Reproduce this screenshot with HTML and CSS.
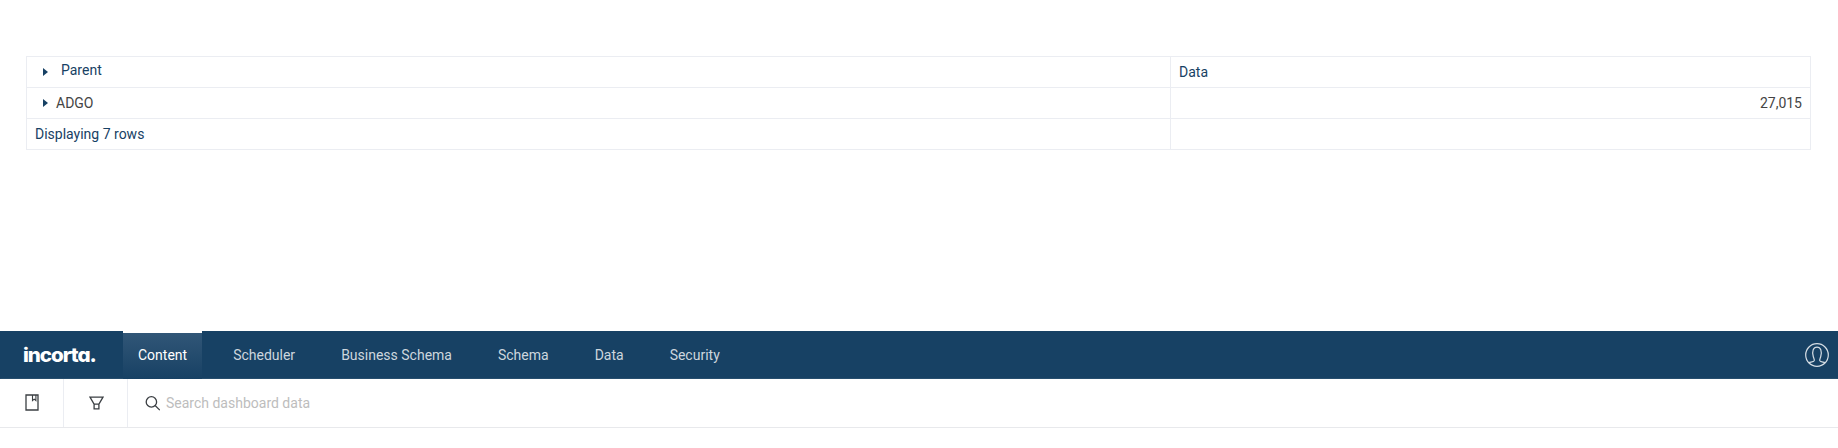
FILE: index.html
```html
<!DOCTYPE html>
<html lang="en">
<head>
<meta charset="utf-8">
<title>Incorta</title>
<link rel="stylesheet" href="styles.css">
</head>
<body>
<main class="report">
  <div class="grid">
    <div class="cell parent"><svg class="caret low" viewBox="0 0 5 8"><path d="M0 0L5 4L0 8Z"/></svg><span>Parent</span></div>
    <div class="cell head">Data</div>
    <div class="cell group"><svg class="caret" viewBox="0 0 5 8"><path d="M0 0L5 4L0 8Z"/></svg><span>ADGO</span></div>
    <div class="cell value">27,015</div>
    <div class="cell">Displaying 7 rows</div>
    <div class="cell"></div>
  </div>
</main>
<header class="navbar">
  <div class="logo"><span>incorta.</span></div>
  <nav class="tabs">
    <a class="tab active">Content</a>
    <a class="tab">Scheduler</a>
    <a class="tab">Business Schema</a>
    <a class="tab">Schema</a>
    <a class="tab">Data</a>
    <a class="tab">Security</a>
  </nav>
  <svg class="avatar" viewBox="0 0 24 24"><circle cx="12" cy="12" r="11.3"/><path d="M4 19.8C5 19 8.4 19.3 9.2 17.8C9.7 16.7 8.8 15.3 8.3 13.7C7.6 11.5 7.4 8.8 8.2 6.7C9 4.7 10.4 4.1 12 4.1S15 4.7 15.8 6.7C16.6 8.8 16.4 11.5 15.7 13.7C15.2 15.3 14.3 16.7 14.8 17.8C15.6 19.3 19 19 20 19.8"/></svg>
</header>
<div class="toolbar">
  <div class="tool"><svg width="14" height="17" viewBox="0 0 14 17"><path d="M1 1H13V16H1Z"/><path class="thin" d="M7.5 1V6.5L9.2 5.1L10.9 6.5V1"/></svg></div>
  <div class="tool"><svg class="funnel" width="15" height="14" viewBox="0 0 15 14"><path d="M1 1.2H14L9.9 8.2V12.9H5.1V8.2ZM5.1 8.2H9.9"/></svg></div>
  <div class="search"><svg width="15" height="15" viewBox="0 0 15 15"><circle cx="6.4" cy="5.9" r="5.2"/><path d="M10.1 9.5L14.8 14.1"/></svg><span>Search dashboard data</span></div>
</div>
</body>
</html>
```
FILE: styles.css
```css
body {
  margin: 0;
  background: #fff;
  font: 14px/20px Roboto, sans-serif;
  color: #174164;
}
.report {
  box-sizing: border-box;
  height: 331px;
  padding: 56px 27px 0 26px;
}
.grid {
  display: grid;
  grid-template-columns: 1144px 1fr;
  grid-auto-rows: 31px;
  border-top: 1px solid #ebedf2;
  border-left: 1px solid #ebedf2;
}
.cell {
  box-sizing: border-box;
  display: flex;
  align-items: center;
  padding: 0 8px;
  border-right: 1px solid #ebedf2;
  border-bottom: 1px solid #ebedf2;
}
.parent {
  padding: 0 16px 4px;
  gap: 13px;
}
.group {
  padding-left: 16px;
  gap: 8px;
  color: #444;
}
.value {
  justify-content: flex-end;
  color: #444;
}
.caret {
  width: 5px;
  height: 8px;
  fill: #174164;
}
.low { margin-top: 4px; }
.navbar {
  display: flex;
  height: 48px;
  background: #174164;
}
.logo {
  box-sizing: border-box;
  width: 123px;
  padding-left: 23px;
}
.logo span {
  display: inline-block;
  font: 800 20px/48px Inter, sans-serif;
  font-feature-settings: "cv11";
  letter-spacing: -1px;
  transform: scaleX(1.03);
  transform-origin: left;
  color: #fff;
}
.tabs {
  display: flex;
  gap: 16px;
}
.tab {
  box-sizing: border-box;
  padding: 0 15px;
  line-height: 48px;
  color: #cdd6de;
}
.active {
  border-top: 2px solid #fff;
  line-height: 44px;
  color: #fff;
  background: linear-gradient(#315677, #174164);
}
.avatar {
  width: 24px;
  height: 24px;
  margin: 12px 9px 0 auto;
  fill: none;
  stroke: #d5dde4;
  stroke-width: 1.2;
}
.toolbar {
  display: flex;
  height: 48px;
  border-bottom: 1px solid #e8e9ec;
  box-shadow: 0 1px 2px #f3f3f3;
}
.toolbar svg {
  fill: none;
  stroke: #3b3f43;
  stroke-width: 1.3;
}
.toolbar .thin { stroke-width: 1.1; }
.tool {
  display: flex;
  box-sizing: border-box;
  width: 64px;
  align-items: center;
  justify-content: center;
  border-right: 1px solid #ebedf2;
}
.tool svg { margin-bottom: 1px; }
.funnel { margin-left: 1px; }
.search {
  display: flex;
  align-items: center;
  padding-left: 17px;
  gap: 6px;
  color: #bdbdbd;
}
```
